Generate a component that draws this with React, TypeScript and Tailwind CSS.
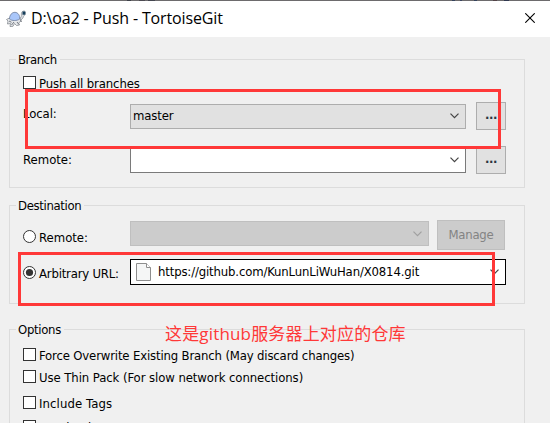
import React from "react";

const label = "whitespace-nowrap text-[13px] leading-4 text-black";

function Caption({ className, children }: { className: string; children: React.ReactNode }) {
  return (
    <div className="-mt-2 flex h-4 pl-1.5">
      <span className={`bg-[#f0f0f0] pr-[3px] pl-[2px] ${label} ${className}`}>{children}</span>
    </div>
  );
}

function Box() {
  return <span className="h-[13px] w-[13px] shrink-0 border border-[#333] bg-white" />;
}

function Radio({ checked = false }: { checked?: boolean }) {
  return (
    <svg width="13" height="13" viewBox="0 0 13 13" className="shrink-0">
      <circle cx="6.5" cy="6.5" r="6" fill="#fff" stroke="#333" />
      {checked && <circle cx="6.5" cy="6.5" r="3.6" fill="#333" />}
    </svg>
  );
}

function Chevron({ color }: { color: string }) {
  return (
    <svg width="9" height="6" viewBox="0 0 9 6" className="shrink-0">
      <path d="M.5 .7 4.5 4.7 8.5 .7" fill="none" stroke={color} strokeWidth="1.2" />
    </svg>
  );
}

function Browse() {
  return (
    <button className="flex h-7 w-[30px] shrink-0 items-end justify-center border border-[#adadad] bg-[#e1e1e1] pb-[7px]">
      <span className="text-[13px] leading-[14px] font-bold tracking-[-0.4px] text-[#2b3340]">...</span>
    </button>
  );
}

function Turtle() {
  return (
    <svg width="20" height="17" viewBox="0 0 20 17" className="shrink-0">
      <path d="M.5 9.500 3.500 8l10.500-.5 1 3.500-2.500 2 1 2-3 .5-2-2-1.500 2.800-3 .2.500-3-3 .5.500-3z" fill="#e5e7ea" stroke="#858a91" strokeWidth=".8" />
      <path d="M3.500 9C3.500 5 6 2.200 9 2.300c3 .2 5 3 4.800 6.700-3 2-8 2-10.300 0z" fill="#a9c6fa" stroke="#6d7c99" strokeWidth=".8" />
      <path d="M14 8c1.500-.5 1.500-2.500 1.300-4C15 1 19.500-.5 19.500 3c0 2.500-2.500 3-2.500 5l-2 2z" fill="#d7dade" stroke="#8b9198" strokeWidth=".7" />
      <path d="M16.500 1.500h2.800v3.200h-2.800z" fill="#153e5b" />
      <path d="m3 11 2.500 1.300M8 12l-2.500 3M11 12l2 2.500M14 10.500l2 1" stroke="#777c83" strokeWidth="1" />
    </svg>
  );
}

function Option({ className, top, children }: { className: string; top: string; children: React.ReactNode }) {
  return (
    <div className={`flex h-4 items-start gap-[3px] pt-[2px] ${top}`}>
      <Box />
      <span className={`${label} ${className}`}>{children}</span>
    </div>
  );
}

export default function App() {
  return (
    <main className="relative h-[423px] w-[550px] overflow-hidden bg-[#f0f0f0] font-['DejaVu_Sans_Condensed','DejaVu_Sans',sans-serif] [font-stretch:condensed]">
      <div className="flex h-px bg-[#6d6b6d]">
        <span className="ml-[127px] w-[4px] bg-[#3d4048]" />
        <span className="ml-[8px] w-[6px] bg-[#4d4b52]" />
        <span className="ml-[3px] w-[7px] bg-[#444650]" />
        <span className="ml-[297px] w-[3px] bg-[#34435c]" />
        <span className="ml-[5px] w-[2px] bg-[#3b4560]" />
        <span className="ml-[12px] w-[3px] bg-[#34435c]" />
        <span className="ml-[16px] w-[4px] bg-[#534348]" />
        <span className="ml-[7px] w-[5px] bg-[#303850]" />
      </div>
      <header className="flex h-[36px] items-center bg-white pr-[15px] pb-[2px] pl-[6px]">
        <Turtle />
        <h1 className="ml-[5px] whitespace-nowrap font-['Open_Sans',sans-serif] text-[16px] leading-5 tracking-[-0.14px] [font-stretch:normal]">D:\oa2 - Push - TortoiseGit</h1>
        <svg width="10" height="10" viewBox="0 0 10 10" className="ml-auto">
          <path d="M.3.3l9.400 9.400M9.700.3l-9.400 9.400" stroke="#000" strokeWidth="1.100" />
        </svg>
      </header>

      <section className="mt-[22px] ml-[9px] h-[129px] w-[516px] border border-[#dcdcdc]">
        <Caption className="tracking-[-0.4px]">Branch</Caption>
        <div className="flex flex-col pl-[13px]">
          <Option top="mt-[6px]" className="tracking-[-0.12px]">Push all branches</Option>
          <div className="mt-[12px] flex h-7 items-center">
            <span className={`-mt-1 w-[107px] tracking-[-0.1px] ${label}`}>Local:</span>
            <div className="flex h-[25px] w-[336px] items-center justify-between border border-[#adadad] bg-[#e1e1e1] pr-[6px] pl-[2px]">
              <span className={`tracking-[-0.15px] ${label}`}>master</span>
              <Chevron color="#444" />
            </div>
            <div className="ml-[10px] flex"><Browse /></div>
          </div>
          <div className="mt-4 flex h-7 items-center">
            <span className={`w-[107px] ${label}`}>Remote:</span>
            <div className="flex h-[25px] w-[336px] items-center justify-end border border-[#7a7a7a] bg-white pr-[6px]">
              <Chevron color="#444" />
            </div>
            <div className="ml-[10px] flex"><Browse /></div>
          </div>
        </div>
      </section>

      <section className="mt-[17px] ml-[9px] h-[99px] w-[516px] border border-[#dcdcdc]">
        <Caption className="tracking-[-0.35px]">Destination</Caption>
        <div className="flex flex-col pl-[13px]">
          <div className="mt-[6px] flex h-[30px] items-start">
            <div className="mt-[10px] flex w-[107px] items-start gap-[3px]">
              <Radio /><span className={label}>Remote:</span>
            </div>
            <div className="mt-px flex h-[25px] w-[299px] items-center justify-end border border-[#bfbfbf] bg-[#ccc] pr-[6px]">
              <Chevron color="#a0a0a0" />
            </div>
            <button className="ml-2 flex h-[30px] w-[68px] items-center justify-center border border-[#bfbfbf] bg-[#ccc] text-[13px] tracking-[-0.25px] text-[#838383]">Manage</button>
          </div>
          <div className="mt-[9px] flex h-[26px] items-start">
            <div className="mt-[7px] flex w-[107px] items-start gap-[3px]">
              <Radio checked /><span className={`tracking-[-0.2px] ${label}`}>Arbitrary URL:</span>
            </div>
            <div className="flex h-[26px] w-[376px] items-center border border-black bg-white pr-[6px] pl-[5px]">
              <svg width="15" height="18" viewBox="0 0 15 18" className="shrink-0">
                <path d="M.5.5h10l4 4v13H.5z" fill="#f5f6f6" stroke="#8e8e8e" />
                <path d="M10.500.5v4h4" fill="#fff" stroke="#8e8e8e" />
              </svg>
              <span className={`ml-[7px] tracking-[-0.15px] ${label}`}>https://github.com/KunLunLiWuHan/X0814.git</span>
              <span className="ml-auto"><Chevron color="#444" /></span>
            </div>
          </div>
        </div>
      </section>

      <section className="mt-[25px] ml-[9px] h-[94px] w-[516px] border border-b-0 border-[#dcdcdc]">
        <Caption className="tracking-[-0.3px]">Options</Caption>
        <div className="flex flex-col pl-[13px]">
          <Option top="mt-[8px]" className="tracking-[-0.16px]">Force Overwrite Existing Branch (May discard changes)</Option>
          <Option top="mt-[6px]" className="tracking-[-0.08px]">Use Thin Pack (For slow network connections)</Option>
          <Option top="mt-[10px]" className="tracking-[0.1px]">Include Tags</Option>
          <Option top="mt-[8px]" className="">Autoload</Option>
        </div>
      </section>

      <div className="absolute top-[89px] left-[25px] h-[60px] w-[476px] border-3 border-[#ff3838]" />
      <div className="absolute top-[252px] left-[18px] h-[54px] w-[477px] border-3 border-[#ff3838]" />
      <p className="absolute top-[322px] left-[165px] whitespace-nowrap font-['Open_Sans','Noto_Sans_CJK_SC',sans-serif] text-[17px] leading-6 tracking-[0.17px] text-[#ff3838] [font-stretch:normal]">这是github服务器上对应的仓库</p>
    </main>
  );
}
